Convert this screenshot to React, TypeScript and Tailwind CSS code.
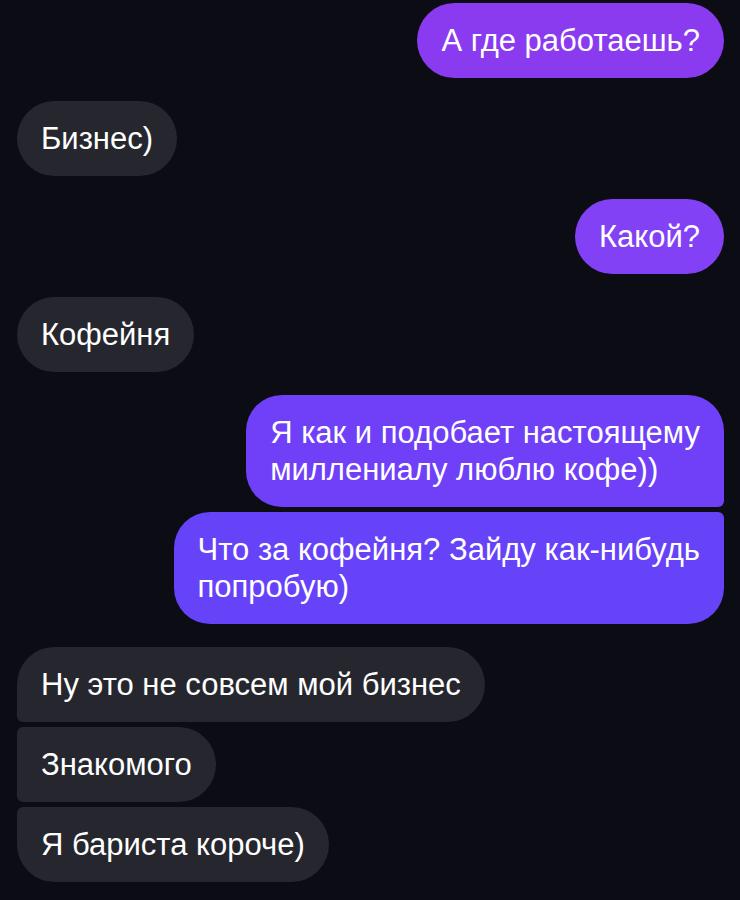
type Message = {
  id: number;
  from: "me" | "them";
  lines: string[];
  bubble: string;
  gap: "group" | "tight";
};

const messages: Message[] = [
  {
    id: 1,
    from: "me",
    lines: ["А где работаешь?"],
    bubble: "rounded-[38px] bg-[#8b3bef]",
    gap: "tight",
  },
  {
    id: 2,
    from: "them",
    lines: ["Бизнес)"],
    bubble: "rounded-[38px]",
    gap: "group",
  },
  {
    id: 3,
    from: "me",
    lines: ["Какой?"],
    bubble: "rounded-[38px] bg-[#8241f4]",
    gap: "group",
  },
  {
    id: 4,
    from: "them",
    lines: ["Кофейня"],
    bubble: "rounded-[38px]",
    gap: "group",
  },
  {
    id: 5,
    from: "me",
    lines: ["Я как и подобает настоящему", "миллениалу люблю кофе))"],
    bubble: "rounded-[36px] rounded-br-[6px] bg-[#6f40f8]",
    gap: "group",
  },
  {
    id: 6,
    from: "me",
    lines: ["Что за кофейня? Зайду как-нибудь", "попробую)"],
    bubble: "rounded-[36px] rounded-tr-[6px] bg-[#6642f8]",
    gap: "tight",
  },
  {
    id: 7,
    from: "them",
    lines: ["Ну это не совсем мой бизнес"],
    bubble: "rounded-[38px] rounded-bl-[6px]",
    gap: "group",
  },
  {
    id: 8,
    from: "them",
    lines: ["Знакомого"],
    bubble: "rounded-[38px] rounded-tl-[6px] rounded-bl-[6px]",
    gap: "tight",
  },
  {
    id: 9,
    from: "them",
    lines: ["Я бариста короче)"],
    bubble: "rounded-[38px] rounded-tl-[6px]",
    gap: "tight",
  },
];

function Bubble({ message }: { message: Message }) {
  const mine = message.from === "me";
  return (
    <div
      className={`flex ${mine ? "justify-end" : "justify-start"} ${
        message.gap === "group" ? "mt-[23px]" : "mt-[5px]"
      } first:mt-0`}
    >
      <div
        className={`whitespace-nowrap px-[24px] py-[19px] text-[31px] leading-[37px] text-white ${
          mine ? "" : "bg-[#26272e]"
        } ${message.bubble}`}
      >
        {message.lines.map((line, i) => (
          <div key={i}>{line}</div>
        ))}
      </div>
    </div>
  );
}

export default function App() {
  return (
    <div
      className="min-h-[900px] w-[740px] bg-[#0c0d14] pl-[17px] pr-[16px] pt-[3px]"
      style={{ fontFamily: '"Liberation Sans", Arial, sans-serif' }}
    >
      {messages.map((m) => (
        <Bubble key={m.id} message={m} />
      ))}
    </div>
  );
}
